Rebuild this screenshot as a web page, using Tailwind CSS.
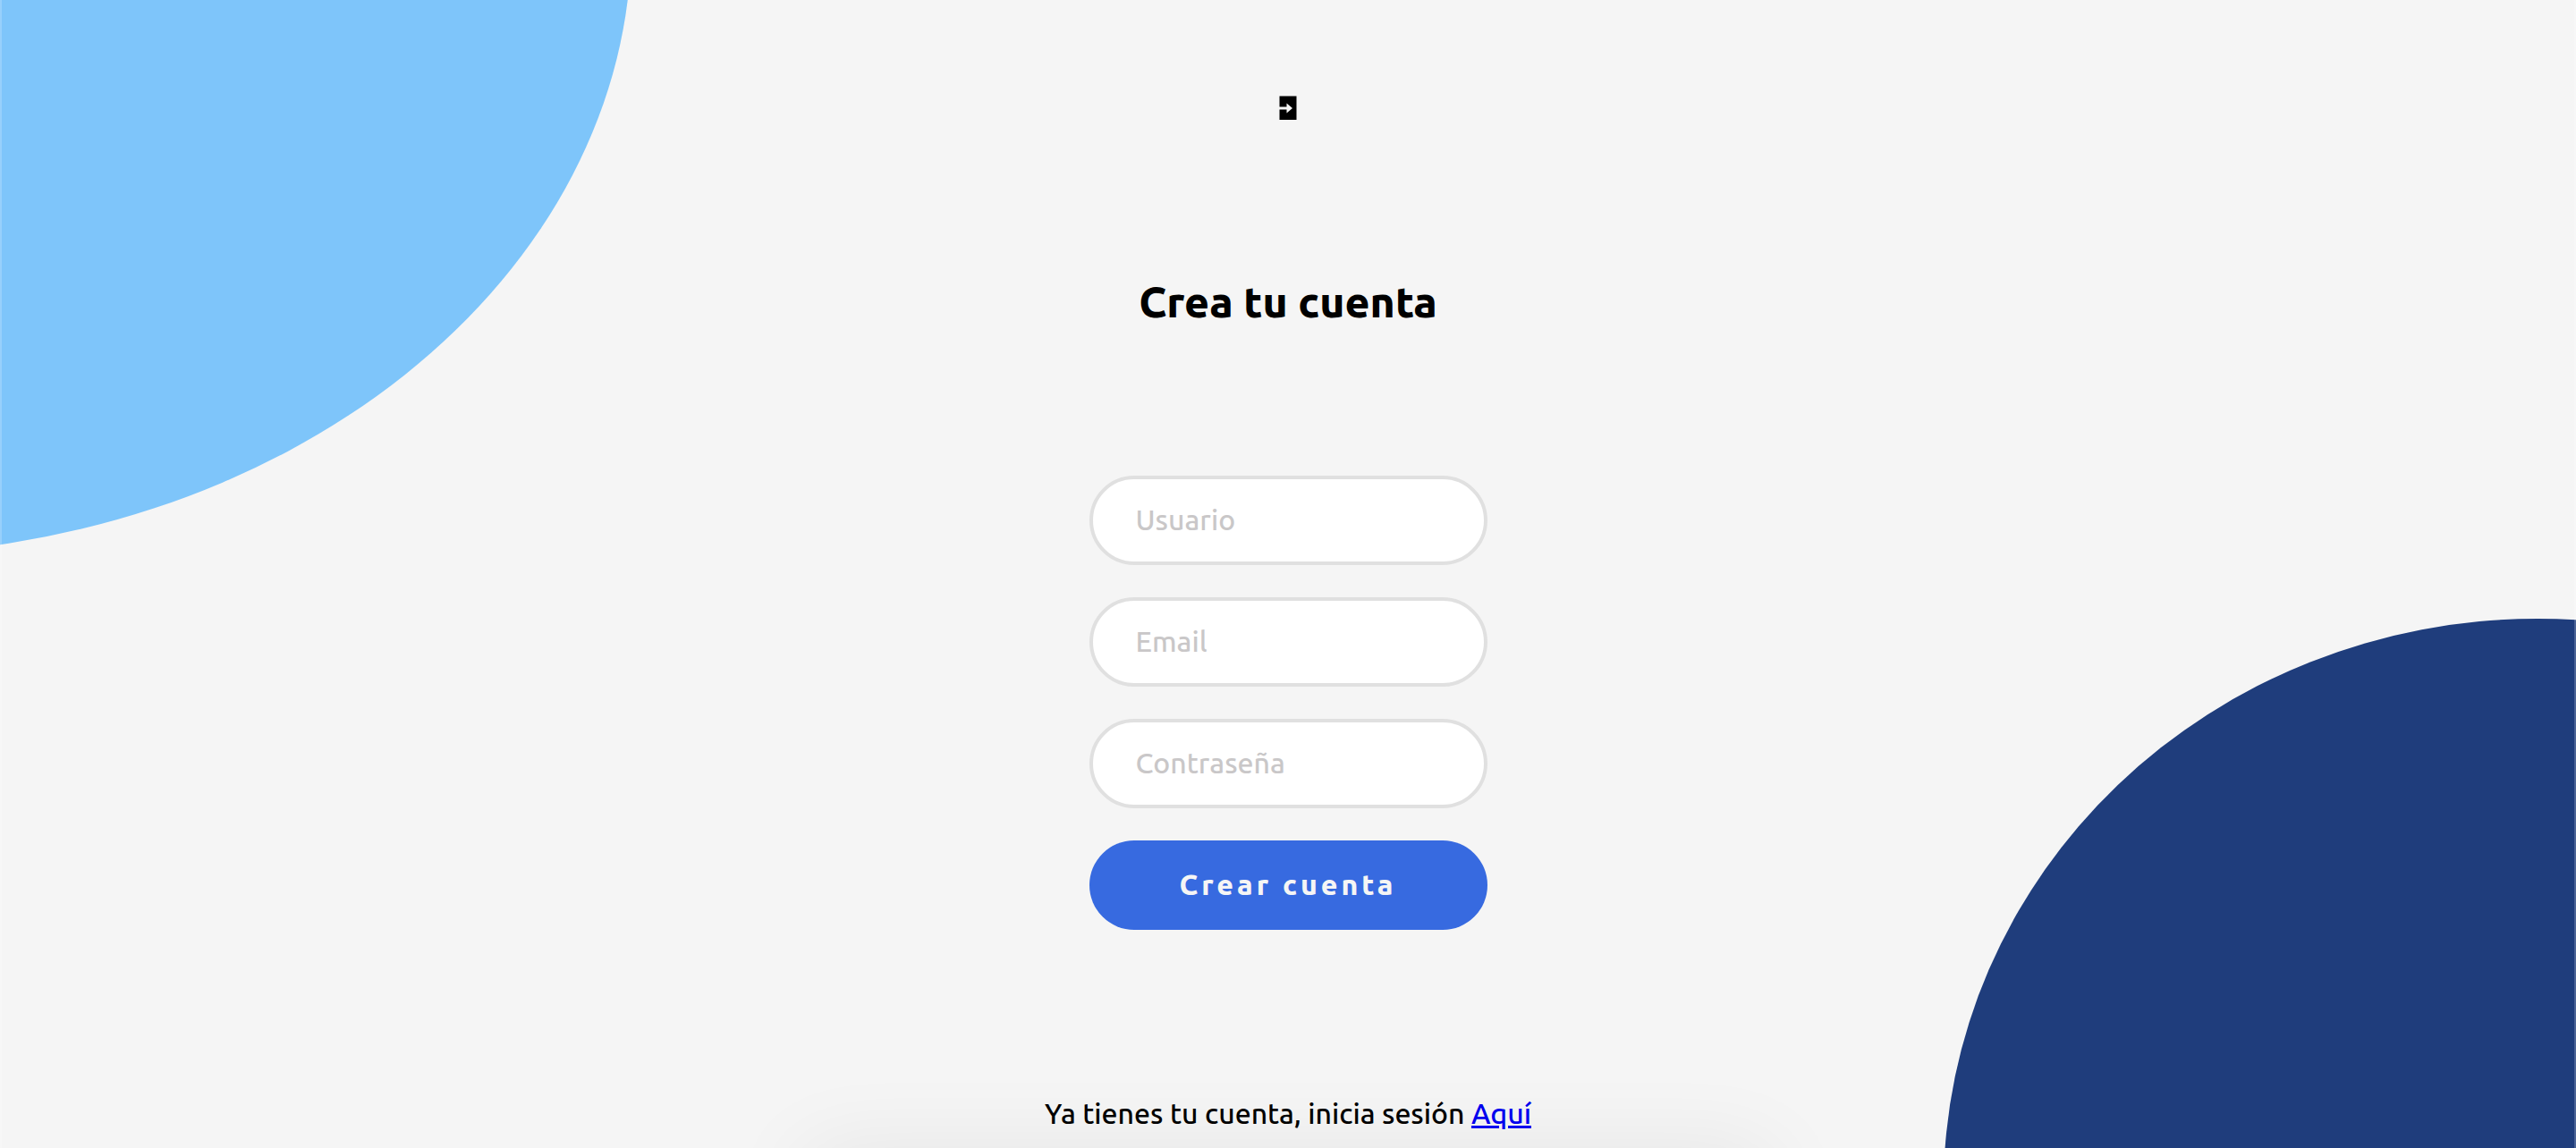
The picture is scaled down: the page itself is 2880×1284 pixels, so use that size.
<!DOCTYPE html>
<html lang="es">
<head>
<meta charset="utf-8">
<meta name="viewport" content="width=device-width, initial-scale=1">
<title>Crea tu cuenta</title>
<script src="https://cdn.jsdelivr.net/npm/@tailwindcss/browser@4"></script>
</head>
<body class="relative min-h-screen bg-[#f5f5f5] font-[Ubuntu,'Noto_Sans',sans-serif] text-[32px] leading-9 font-medium text-black">
  <!-- Background shapes -->
  <div class="absolute inset-0 overflow-hidden" aria-hidden="true">
    <svg class="size-full" viewBox="0 0 2880 1284" preserveAspectRatio="none">
      <ellipse cx="-159" cy="-68" rx="865" ry="689" fill="#7ec5fa"/>
      <ellipse cx="2837" cy="1328" rx="664" ry="636" fill="#1f3d7c"/>
    </svg>
    <!-- Soft shadow rising from the bottom edge -->
    <div class="mx-auto h-px w-[980px] shadow-[0_54px_100px_50px_rgba(0,0,0,0.07)]"></div>
    <div class="absolute inset-0 border-x-2 border-white/20"></div>
  </div>

  <main class="relative flex flex-col items-center pt-[107px]">
    <svg class="h-7 w-5" viewBox="0 0 20 28" aria-hidden="true"><path d="M.5.5h19v26.500H.5V15.500H8.500V19.500L15 14 8.500 8.500V12.500H.5z"/></svg>
    <h1 class="mt-[174px] text-[48px] leading-[56px] font-extrabold">Crea tu cuenta</h1>
    <form class="mt-[167px] flex w-[445px] flex-col gap-9">
      <input class="h-[100px] w-full rounded-full border-4 border-[#e0e0e0] bg-white px-12 pb-0.5 placeholder:text-[#c9c7c8]" type="text" placeholder="Usuario" aria-label="Usuario">
      <input class="h-[100px] w-full rounded-full border-4 border-[#e0e0e0] bg-white px-12 pb-0.5 placeholder:text-[#c9c7c8]" type="email" placeholder="Email" aria-label="Email">
      <input class="h-[100px] w-full rounded-full border-4 border-[#e0e0e0] bg-white px-12 pb-0.5 placeholder:text-[#c9c7c8]" type="password" placeholder="Contraseña" aria-label="Contraseña">
      <button class="h-[100px] w-full rounded-full bg-[#376ae0] pb-0.5 font-extrabold tracking-[4px] text-[#f5f5f5]" type="button">Crear cuenta</button>
    </form>
    <p class="mt-[187px]">Ya tienes tu cuenta, inicia sesión <a class="text-[#0000ee] underline" href="#">Aquí</a></p>
  </main>
</body>
</html>
